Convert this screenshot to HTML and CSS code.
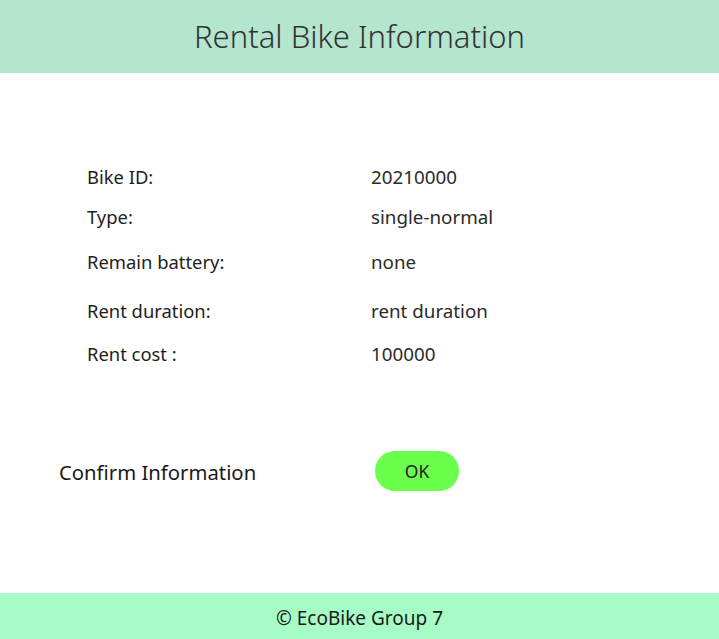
FILE: index.html
```html
<!DOCTYPE html>
<html lang="en">
<head>
<meta charset="utf-8">
<title>Rental Bike Information</title>
<link rel="stylesheet" href="styles.css">
</head>
<body>
<header class="header">
  <h1 class="title">Rental Bike Information</h1>
</header>
<main class="main">
  <div class="info">
    <div class="row r1"><span class="label">Bike ID:</span><span class="value">20210000</span></div>
    <div class="row r2"><span class="label">Type:</span><span class="value">single-normal</span></div>
    <div class="row r3"><span class="label">Remain battery:</span><span class="value">none</span></div>
    <div class="row r4"><span class="label">Rent duration:</span><span class="value">rent duration</span></div>
    <div class="row r5"><span class="label">Rent cost :</span><span class="value">100000</span></div>
  </div>
  <div class="confirm">
    <span class="confirm-label">Confirm Information</span>
    <button class="ok-btn" type="button">OK</button>
  </div>
</main>
<footer class="footer">© EcoBike Group 7</footer>
</body>
</html>
```

FILE: styles.css
```css
* { box-sizing: border-box; }
html, body { margin: 0; padding: 0; }
body {
  width: 719px;
  height: 639px;
  font-family: "Noto Sans", "Open Sans", sans-serif;
  color: #222;
  background: #fff;
  display: flex;
  flex-direction: column;
  overflow: hidden;
}
.header {
  height: 73px;
  background: #b3e5cf;
  display: flex;
  align-items: center;
  justify-content: center;
}
.title {
  margin: 0;
  font-weight: 300;
  font-size: 31px;
  color: #333;
  line-height: 1;
}
.main {
  flex: 1;
  display: flex;
  flex-direction: column;
}
.info {
  padding: 92px 0 0 87px;
  display: flex;
  flex-direction: column;
}
.row {
  display: flex;
  height: 24px;
  align-items: baseline;
  font-size: 18.4px;
  line-height: 24px;
}
.r2 { margin-top: 16px; }
.r3 { margin-top: 21px; }
.r4 { margin-top: 25px; }
.r5 { margin-top: 19px; }
.label { width: 284px; color: #1e1e1e; }
.value { color: #2a2a2a; font-size: 18.8px; }
.confirm {
  display: flex;
  align-items: center;
  margin-top: 85px;
  padding-left: 59px;
}
.confirm-label {
  width: 316px;
  font-size: 20.3px;
  color: #1a1a1a;
  margin-top: 1px;
}
.ok-btn {
  width: 84px;
  height: 40px;
  border: none;
  border-radius: 20px;
  background: #6aff4c;
  font-family: inherit;
  font-size: 17.5px;
  color: #222;
  padding: 0 0 1px;
}
.footer {
  height: 46px;
  padding-top: 4px;
  background: #a6fcc4;
  display: flex;
  align-items: center;
  justify-content: center;
  font-size: 19px;
  color: #1a1a1a;
}
```
